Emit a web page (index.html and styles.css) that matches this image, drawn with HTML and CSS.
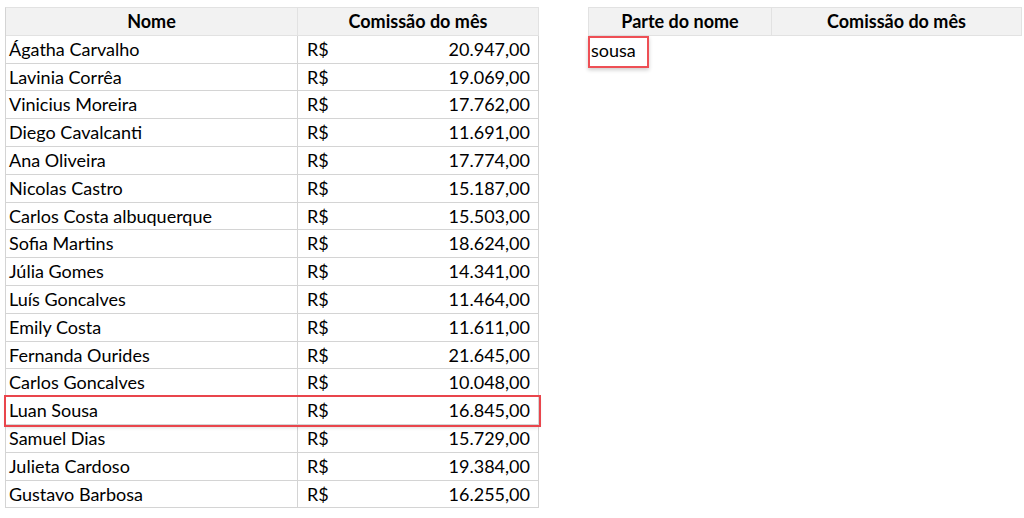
FILE: index.html
```html
<!DOCTYPE html>
<html lang="pt-BR">
<head>
    <meta charset="UTF-8">
    <meta name="viewport" content="width=device-width, initial-scale=1.0">
    <title>Comissões</title>
    <link rel="stylesheet" href="styles.css">
</head>
<body>
    <div class="page">
        <div class="sheet left">
            <div class="row head">
                <div class="cell">Nome</div>
                <div class="cell">Comissão do mês</div>
            </div>
            <div class="row"><div class="cell">Ágatha Carvalho</div><div class="cell money"><span>R$</span><span>20.947,00</span></div></div>
            <div class="row"><div class="cell">Lavinia Corrêa</div><div class="cell money"><span>R$</span><span>19.069,00</span></div></div>
            <div class="row"><div class="cell">Vinicius Moreira</div><div class="cell money"><span>R$</span><span>17.762,00</span></div></div>
            <div class="row"><div class="cell">Diego Cavalcanti</div><div class="cell money"><span>R$</span><span>11.691,00</span></div></div>
            <div class="row"><div class="cell">Ana Oliveira</div><div class="cell money"><span>R$</span><span>17.774,00</span></div></div>
            <div class="row"><div class="cell">Nicolas Castro</div><div class="cell money"><span>R$</span><span>15.187,00</span></div></div>
            <div class="row"><div class="cell">Carlos Costa albuquerque</div><div class="cell money"><span>R$</span><span>15.503,00</span></div></div>
            <div class="row"><div class="cell">Sofia Martins</div><div class="cell money"><span>R$</span><span>18.624,00</span></div></div>
            <div class="row"><div class="cell">Júlia Gomes</div><div class="cell money"><span>R$</span><span>14.341,00</span></div></div>
            <div class="row"><div class="cell">Luís Goncalves</div><div class="cell money"><span>R$</span><span>11.464,00</span></div></div>
            <div class="row"><div class="cell">Emily Costa</div><div class="cell money"><span>R$</span><span>11.611,00</span></div></div>
            <div class="row"><div class="cell">Fernanda Ourides</div><div class="cell money"><span>R$</span><span>21.645,00</span></div></div>
            <div class="row"><div class="cell">Carlos Goncalves</div><div class="cell money"><span>R$</span><span>10.048,00</span></div></div>
            <div class="row hit"><div class="cell">Luan Sousa</div><div class="cell money"><span>R$</span><span>16.845,00</span></div></div>
            <div class="row"><div class="cell">Samuel Dias</div><div class="cell money"><span>R$</span><span>15.729,00</span></div></div>
            <div class="row"><div class="cell">Julieta Cardoso</div><div class="cell money"><span>R$</span><span>19.384,00</span></div></div>
            <div class="row"><div class="cell">Gustavo Barbosa</div><div class="cell money"><span>R$</span><span>16.255,00</span></div></div>
        </div>

        <div class="sheet right">
            <div class="row head">
                <div class="cell">Parte do nome</div>
                <div class="cell">Comissão do mês</div>
            </div>
            <div class="row plain">
                <div class="cell"><span class="search">sousa</span></div>
                <div class="cell"></div>
            </div>
        </div>
    </div>
</body>
</html>
```

FILE: styles.css
```css
body {
    margin: 0;
    background: #ffffff;
    font-family: Lato, "Open Sans", sans-serif;
    font-size: 18px;
    color: #000000;
}
.page {
    display: flex;
    align-items: flex-start;
    padding: 7px 0 0 5px;
    gap: 49px;
}
.sheet {
    border-left: 1px solid #d4d4d4;
    border-top: 1px solid #e2e2e2;
}
.left {
    width: 533px;
}
.right {
    width: 433px;
    border-left-color: #e2e2e2;
}
.row {
    display: grid;
    height: 27.8px;
    box-sizing: border-box;
    border-bottom: 1px solid #d4d4d4;
}
.left .row {
    grid-template-columns: 292px 241px;
}
.right .row {
    grid-template-columns: 183px 250px;
}
.cell {
    border-right: 1px solid #d4d4d4;
    padding: 0 3px;
    line-height: 27px;
    white-space: nowrap;
}
.head {
    background: #f2f2f2;
    font-weight: bold;
    border-bottom-color: #e2e2e2;
}
.head .cell {
    text-align: center;
    border-right-color: #e2e2e2;
}
.money {
    display: flex;
    justify-content: space-between;
    padding: 0 8px 0 9px;
}
.hit {
    outline: 2px solid #e9454c;
    outline-offset: 0;
    box-shadow: 0 2px 4px rgba(0, 0, 0, 0.2);
    position: relative;
}
.plain {
    border-bottom: none;
}
.plain .cell {
    border-right: none;
    padding: 0;
}
.search {
    display: inline-block;
    width: 56px;
    height: 28px;
    line-height: 25px;
    padding-left: 1px;
    border: 2px solid #ee4f55;
    box-shadow: 0 2px 4px rgba(0, 0, 0, 0.2);
    margin-left: -1px;
}
```
